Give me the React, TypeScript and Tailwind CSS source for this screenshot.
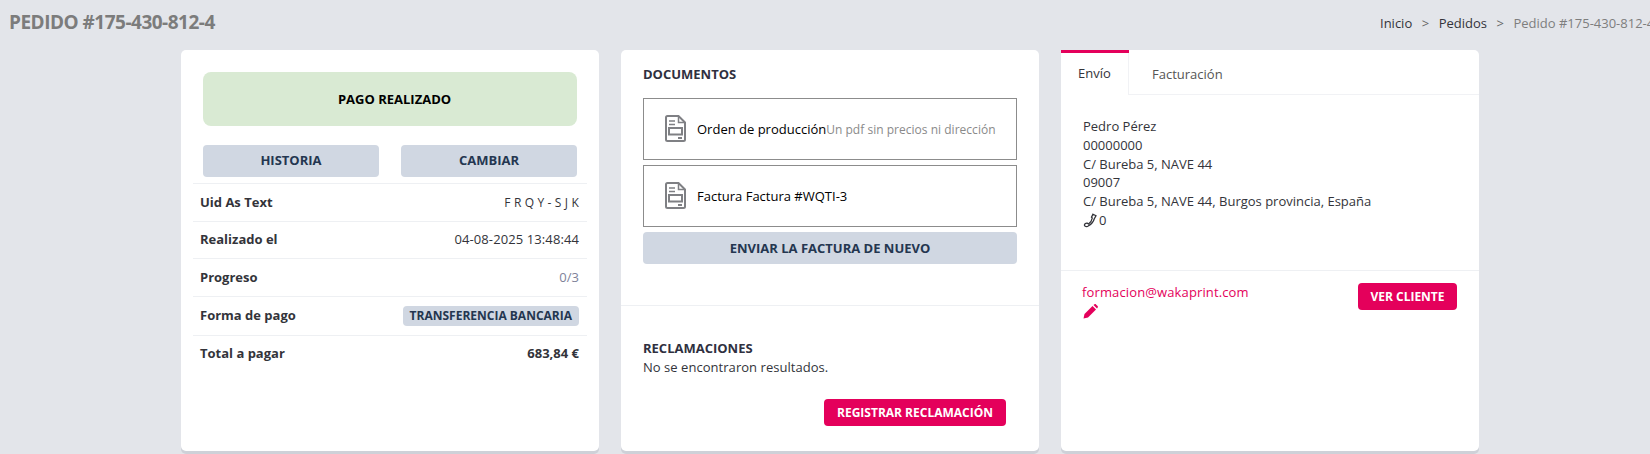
const filas = [
  { label: "Uid As Text", value: "F R Q Y - S J K", cls: "text-[12px] tracking-[0.15px] text-[#33343a]", h: "h-[38px]" },
  { label: "Realizado el", value: "04-08-2025 13:48:44", cls: "tracking-[0.1px] text-[#33343a]", h: "h-[37px]" },
  { label: "Progreso", value: "0/3", cls: "text-[#7e8299]", h: "h-[38px]" },
];

function DocIcon() {
  return (
    <svg width="21" height="27" viewBox="0 0 21 27" fill="none" stroke="#7f8084" strokeWidth="2" className="shrink-0">
      <path d="M2.500 1H13.500L20 7.500V24.500A1.500 1.500 0 0 1 18.500 26H2.500A1.500 1.500 0 0 1 1 24.500V2.500A1.500 1.500 0 0 1 2.500 1Z" />
      <path d="M13.500 1V7.500H20" strokeWidth="1.500" />
      <path d="M4 6H10M4 9.500H10" strokeWidth="1.500" />
      <rect x="4" y="13" width="13" height="6.500" />
      <path d="M13 23H17" />
    </svg>
  );
}

function PhoneIcon() {
  return (
    <svg width="15" height="15" viewBox="0 0 14 15" fill="none" stroke="#33343a" strokeWidth="1.300" className="shrink-0">
      <path d="M9.500 1.200 12.500 2.800 10.800 5.800C10 8.500 7.800 11.300 5.200 12.600 3.800 14 1.600 14 1 12.600 0.600 11.300 2 10 3.800 10.200L5 11C7 9.500 8.500 7 8.800 5L8 4.200Z" />
    </svg>
  );
}

function PencilIcon() {
  return (
    <svg width="15" height="15" viewBox="0 0 15 15" fill="#e4005b" className="ml-[1px] mt-[3px]">
      <path d="M0.500 14.500 1.500 10 9.500 2 13 5.500 5 13.500Z" />
      <path d="M10.500 1 11.500 0.300C12 0 12.500 0 13 0.400L14.600 2C15 2.500 15 3 14.700 3.500L14 4.500Z" />
    </svg>
  );
}

function DocBox({ title, note }: { title: string; note?: string }) {
  return (
    <div className="flex h-[62px] items-center gap-[11px] border border-[#8c8c8c] pl-[21px]">
      <DocIcon />
      <span className="pt-[2px] text-black">
        {title}
        {note && <span className="text-[12px] tracking-[0.02px] text-[#8a8a8a]">{note}</span>}
      </span>
    </div>
  );
}

export default function App() {
  return (
    <div className="h-[454px] w-[1650px] overflow-hidden bg-[#e3e5ea] font-['Open_Sans',sans-serif] text-[13px] text-[#33343a]">
      <header className="flex h-[50px] items-start justify-between pl-[9px]">
        <h1 className="mt-[8px] text-[19px] font-bold tracking-[-0.5px] text-[#7c7c7c]">PEDIDO #175-430-812-4</h1>
        <nav className="mt-[14px] flex w-[270px] shrink-0 gap-[9.500px] overflow-hidden whitespace-nowrap">
          <span>Inicio</span>
          <span className="text-[#666]">&gt;</span>
          <span>Pedidos</span>
          <span className="text-[#666]">&gt;</span>
          <span className="text-[#7e7e7e]">Pedido #175-430-812-4</span>
        </nav>
      </header>

      <main className="grid h-[401px] grid-cols-3 gap-[22px] pl-[181px] pr-[171px]">
        {/* Pago */}
        <section className="rounded-[5px] bg-white px-[12px] pt-[22px] shadow-[0_3px_0_#ced1d8]">
          <div className="mx-[10px] flex h-[54px] items-center justify-center rounded-[8px] bg-[#d9ead3] pl-[9px] pt-[2px] font-bold text-black">PAGO REALIZADO</div>
          <div className="mx-[10px] mt-[19px] grid grid-cols-2 gap-[22px]">
            <button className="h-[32px] rounded-[4px] bg-[#d0d7e2] font-bold text-[#243650]">HISTORIA</button>
            <button className="h-[32px] rounded-[4px] bg-[#d0d7e2] font-bold text-[#243650]">CAMBIAR</button>
          </div>
          <div className="mt-[6px]">
            {filas.map((f) => (
              <div key={f.label} className={`flex items-center justify-between border-t border-[#eef0f3] pl-[7px] pr-[8px] ${f.h}`}>
                <span className="font-bold">{f.label}</span>
                <span className={f.cls}>{f.value}</span>
              </div>
            ))}
            <div className="flex h-[39px] items-center justify-between border-t border-[#eef0f3] pl-[7px] pr-[8px]">
              <span className="font-bold">Forma de pago</span>
              <span className="rounded-[4px] bg-[#d0d7e2] px-[7px] py-[1px] text-[12px] font-bold text-[#243650]">TRANSFERENCIA BANCARIA</span>
            </div>
            <div className="flex h-[37px] items-center justify-between border-t border-[#eef0f3] pl-[7px] pr-[8px] font-bold">
              <span>Total a pagar</span>
              <span>683,84 €</span>
            </div>
          </div>
        </section>

        {/* Documentos */}
        <section className="flex flex-col rounded-[5px] bg-white shadow-[0_3px_0_#ced1d8]">
          <div className="h-[256px] border-b border-[#eef0f3] px-[22px] pt-[15px]">
            <h2 className="font-bold text-[#2f3040]">DOCUMENTOS</h2>
            <div className="mt-[13px] flex flex-col gap-[5px]">
              <DocBox title="Orden de producción" note="Un pdf sin precios ni dirección" />
              <DocBox title="Factura Factura #WQTI-3" />
            </div>
            <button className="mt-[5px] h-[32px] w-full rounded-[4px] bg-[#d0d7e2] pt-[2px] font-bold text-[#243650]">ENVIAR LA FACTURA DE NUEVO</button>
          </div>
          <div className="px-[22px] pt-[33px]">
            <h2 className="font-bold leading-[18px] text-[#2f3040]">RECLAMACIONES</h2>
            <p className="leading-[20px] tracking-[0.04px]">No se encontraron resultados.</p>
            <div className="mt-[22px] flex justify-end pr-[11px]">
              <button className="h-[27px] rounded-[4px] bg-[#e4005b] px-[13px] text-[12px] font-bold text-white">REGISTRAR RECLAMACIÓN</button>
            </div>
          </div>
        </section>

        {/* Envío */}
        <section className="flex flex-col rounded-[5px] bg-white shadow-[0_3px_0_#ced1d8]">
          <div className="flex h-[45px] border-b border-[#f1f2f5]">
            <div className="flex h-[45px] w-[68px] flex-col bg-white">
              <div className="h-[3px] bg-[#e4005b]" />
              <div className="flex flex-1 items-center justify-center border-r border-[#f1f2f5]">Envío</div>
            </div>
            <div className="flex items-center pl-[23px] pt-[5px] text-[#555]">Facturación</div>
          </div>
          <div className="h-[176px] border-b border-[#eef0f3] px-[22px] pt-[22px] leading-[18.800px]">
            <p>Pedro Pérez</p>
            <p>00000000</p>
            <p>C/ Bureba 5, NAVE 44</p>
            <p>09007</p>
            <p>C/ Bureba 5, NAVE 44, Burgos provincia, España</p>
            <p className="flex items-center gap-[1px]"><PhoneIcon /> 0</p>
          </div>
          <div className="flex items-start justify-between pl-[21px] pr-[22px] pt-[12px]">
            <div className="text-[#e4005b]">
              <p className="leading-[18px] tracking-[0.13px]">formacion@wakaprint.com</p>
              <PencilIcon />
            </div>
            <button className="h-[27px] w-[99px] rounded-[4px] bg-[#e4005b] text-[12px] font-bold text-white">VER CLIENTE</button>
          </div>
        </section>
      </main>
    </div>
  );
}
